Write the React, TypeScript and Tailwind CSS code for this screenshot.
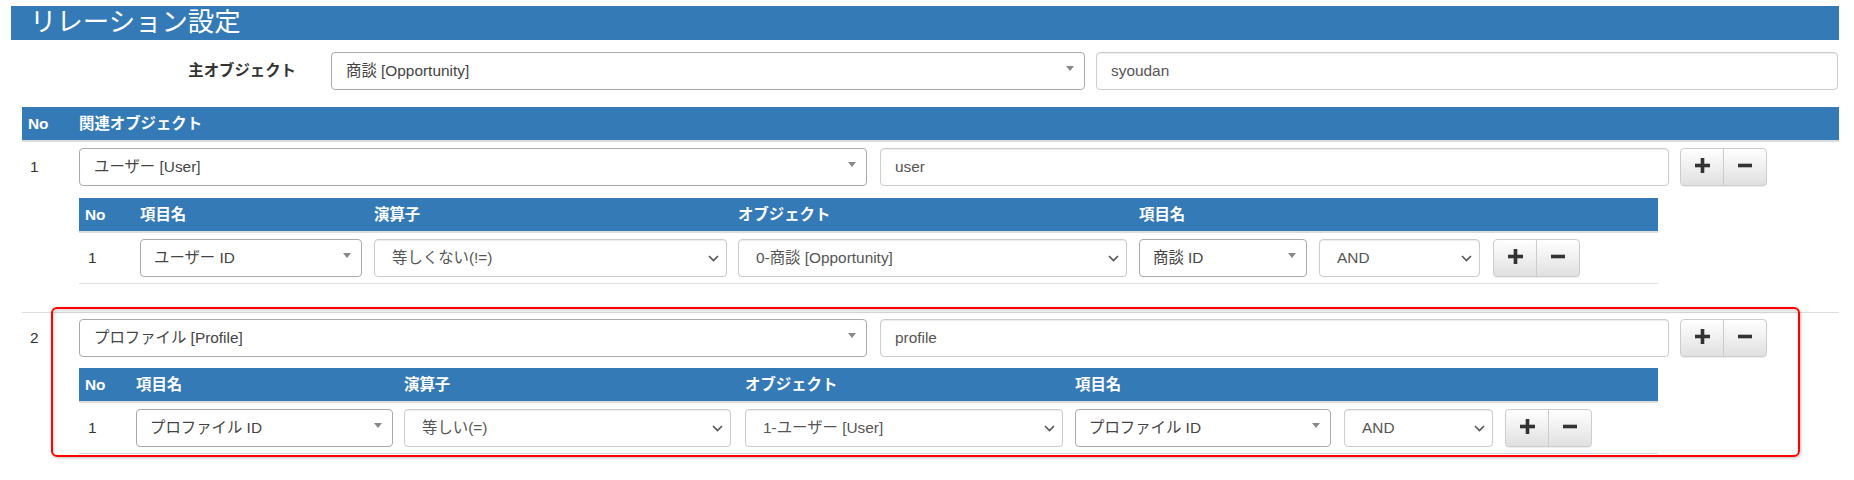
import React from "react";

// Select2-style single select box (triangle arrow)
function Select2({ w, text, pl = "pl-[14px]" }: { w: string; text: string; pl?: string }) {
  return (
    <div className={`${w} h-[38px] shrink-0 flex border border-[#aaa] rounded-[4px] bg-white`}>
      <span className={`flex-1 self-center ${pl} text-[#444] whitespace-nowrap overflow-hidden`}>{text}</span>
      <span className="mt-[13px] mr-[10px] w-0 h-0 border-x-[4.5px] border-x-transparent border-t-[5.5px] border-t-[#888]" />
    </div>
  );
}

// Native select look (chevron on the right)
function NativeSelect({ w, text }: { w: string; text: string }) {
  return (
    <div className={`${w} h-[38px] shrink-0 flex items-center border border-[#ccc] rounded-[4px] bg-white shadow-[inset_0_1px_1px_rgba(0,0,0,0.075)]`}>
      <span className="flex-1 pl-[17px] text-[#555] whitespace-nowrap overflow-hidden">{text}</span>
      <svg width="11" height="7" viewBox="0 0 11 7" className="mr-[7px]">
        <polyline points="1,1 5.5,5.5 10,1" fill="none" stroke="#555" strokeWidth="1.6" />
      </svg>
    </div>
  );
}

function TextInput({ w, value }: { w: string; value: string }) {
  return (
    <div className={`${w} h-[38px] shrink-0 flex items-center border border-[#ccc] rounded-[4px] bg-white pl-[14px] text-[#555] shadow-[inset_0_1px_1px_rgba(0,0,0,0.075)]`}>
      {value}
    </div>
  );
}

function PlusIcon() {
  return (
    <svg width="15" height="15" viewBox="0 0 15 15" className="mb-[3px]">
      <rect x="5.7" y="0" width="3.6" height="15" fill="#333" />
      <rect x="0" y="5.7" width="15" height="3.6" fill="#333" />
    </svg>
  );
}

function MinusIcon() {
  return (
    <svg width="14" height="15" viewBox="0 0 14 15" className="mb-[3px]">
      <rect x="0" y="5.7" width="14" height="3.6" fill="#333" />
    </svg>
  );
}

function AddRemove() {
  return (
    <div className="flex h-[38px] shrink-0">
      <button className="w-[44px] h-[38px] flex items-center justify-center border border-[#ccc] rounded-l-[4px] bg-[linear-gradient(to_bottom,#ffffff_0%,#e0e0e0_100%)] shadow-[inset_0_1px_0_rgba(255,255,255,0.15),0_1px_1px_rgba(0,0,0,0.075)]">
        <PlusIcon />
      </button>
      <button className="w-[44px] h-[38px] -ml-px flex items-center justify-center border border-[#ccc] rounded-r-[4px] bg-[linear-gradient(to_bottom,#ffffff_0%,#e0e0e0_100%)] shadow-[inset_0_1px_0_rgba(255,255,255,0.15),0_1px_1px_rgba(0,0,0,0.075)]">
        <MinusIcon />
      </button>
    </div>
  );
}

type Cond = {
  cells: string[]; // cell widths: no, field, operator, object, field, logic
  selects: string[]; // select widths: field, operator, object, field, logic
  field: string;
  op: string;
  obj: string;
  target: string;
};

function ConditionTable({ c, mt }: { c: Cond; mt: string }) {
  return (
    <div className={`${mt} w-[1579px]`}>
      <div className="h-[33px] bg-[#337ab7] flex items-center text-white font-bold border-b-2 border-[#ddd] box-content">
        <div className={`${c.cells[0]} pl-[6px]`}>No</div>
        <div className={c.cells[1]}>項目名</div>
        <div className={c.cells[2]}>演算子</div>
        <div className={c.cells[3]}>オブジェクト</div>
        <div className={c.cells[4]}>項目名</div>
      </div>
      <div className="flex items-center py-[6px] border-b border-[#ddd]">
        <div className={`${c.cells[0]} pl-[9px]`}>1</div>
        <div className={c.cells[1]}>
          <Select2 w={c.selects[0]} text={c.field} pl="pl-[13px]" />
        </div>
        <div className={c.cells[2]}>
          <NativeSelect w={c.selects[1]} text={c.op} />
        </div>
        <div className={c.cells[3]}>
          <NativeSelect w={c.selects[2]} text={c.obj} />
        </div>
        <div className={c.cells[4]}>
          <Select2 w={c.selects[3]} text={c.target} pl="pl-[13px]" />
        </div>
        <div className={c.cells[5]}>
          <NativeSelect w={c.selects[4]} text="AND" />
        </div>
        <AddRemove />
      </div>
    </div>
  );
}

const cond1: Cond = {
  cells: ["w-[61px]", "w-[234px]", "w-[364px]", "w-[401px]", "w-[180px]", "w-[174px]"],
  selects: ["w-[222px]", "w-[353px]", "w-[389px]", "w-[168px]", "w-[161px]"],
  field: "ユーザー ID",
  op: "等しくない(!=)",
  obj: "0-商談 [Opportunity]",
  target: "商談 ID",
};

const cond2: Cond = {
  cells: ["w-[57px]", "w-[268px]", "w-[341px]", "w-[330px]", "w-[269px]", "w-[161px]"],
  selects: ["w-[257px]", "w-[327px]", "w-[318px]", "w-[256px]", "w-[149px]"],
  field: "プロファイル ID",
  op: "等しい(=)",
  obj: "1-ユーザー [User]",
  target: "プロファイル ID",
};

function RelationRow({ no, obj, name, cond, mt }: { no: string; obj: string; name: string; cond: Cond; mt: string }) {
  return (
    <div className="flex">
      <div className="w-[57px] pl-[8px] h-[38px] flex items-center shrink-0">{no}</div>
      <div className="flex flex-col">
        <div className="flex items-center">
          <Select2 w="w-[788px]" text={obj} />
          <div className="ml-[13px]">
            <TextInput w="w-[789px]" value={name} />
          </div>
          <div className="ml-[11px]">
            <AddRemove />
          </div>
        </div>
        <ConditionTable c={cond} mt={mt} />
      </div>
    </div>
  );
}

export default function App() {
  return (
    <div className="w-[1854px] h-[480px] bg-white pl-[11px] pt-[6px] text-[15.4px] text-[#333] font-['Liberation_Sans','Noto_Sans_CJK_JP',sans-serif] overflow-hidden">
      <div className="w-[1828px]">
        <h1 className="h-[34px] bg-[#337ab7] text-white text-[26.4px] leading-none pl-[19px] pb-[2px] flex items-center">
          リレーション設定
        </h1>

        <div className="mt-[12px] h-[38px] flex items-center">
          <div className="w-[285px] text-right font-bold">主オブジェクト</div>
          <div className="ml-[35px]">
            <Select2 w="w-[754px]" text="商談 [Opportunity]" />
          </div>
          <div className="ml-[11px]">
            <TextInput w="w-[742px]" value="syoudan" />
          </div>
        </div>

        <div className="mt-[17px] ml-[11px] w-[1817px]">
          <div className="h-[33px] bg-[#337ab7] flex items-center text-white font-bold border-b-2 border-[#ddd] box-content">
            <div className="w-[57px] pl-[6px]">No</div>
            <div>関連オブジェクト</div>
          </div>

          <div className="pt-[6px] pb-[28px] border-b border-[#ddd]">
            <RelationRow no="1" obj="ユーザー [User]" name="user" cond={cond1} mt="mt-[12px]" />
          </div>

          <div className="relative pt-[6px] pb-[4px]">
            <RelationRow no="2" obj="プロファイル [Profile]" name="profile" cond={cond2} mt="mt-[11px]" />
            {/* highlight frame around the second relation */}
            <div className="absolute left-[29px] top-[-6px] w-[1749px] h-[150px] border-2 border-[#ff0000] rounded-[6px] pointer-events-none shadow-[inset_1px_2px_4px_rgba(0,0,0,0.16),1px_1px_3px_rgba(0,0,0,0.25)]" />
          </div>
        </div>
      </div>
    </div>
  );
}
